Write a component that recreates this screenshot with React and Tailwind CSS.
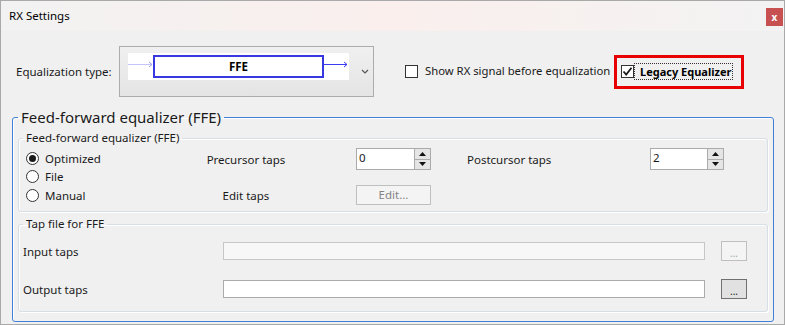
import React from "react";

const font = "font-['Noto_Sans',sans-serif]";

function CheckBox({ checked }) {
  return (
    <span className="w-[13px] h-[13px] border border-[#333] bg-white flex items-center justify-center shrink-0">
      {checked && (
        <svg width="11" height="11" viewBox="0 0 11 11">
          <path d="M1.5 5.5 L4.2 8.5 L9.5 1.8" fill="none" stroke="#1a1a1a" strokeWidth="1.8" />
        </svg>
      )}
    </span>
  );
}

function Radio({ checked, label }) {
  return (
    <div className="h-[18.5px] flex items-center">
      <span className="w-[13px] h-[13px] rounded-full border border-[#333] bg-white flex items-center justify-center shrink-0">
        {checked && <span className="w-[7px] h-[7px] rounded-full bg-[#1a1a1a]" />}
      </span>
      <span className="ml-[6px]">{label}</span>
    </div>
  );
}

function SpinBox({ value }) {
  return (
    <div className="w-full h-[22px] border border-[#ababab] bg-white flex">
      <span className="flex-1 pl-[2px] leading-[18px]">{value}</span>
      <div className="w-[16px] h-full flex flex-col border-l border-[#ababab]">
        <span className="flex-1 bg-[#e5e5e5] border-b border-[#ababab] flex items-center justify-center">
          <svg width="7" height="4" viewBox="0 0 7 4"><path d="M0 4 L3.5 0 L7 4 Z" fill="#111" /></svg>
        </span>
        <span className="flex-1 bg-[#e5e5e5] flex items-center justify-center">
          <svg width="7" height="4" viewBox="0 0 7 4"><path d="M0 0 L3.5 4 L7 0 Z" fill="#111" /></svg>
        </span>
      </div>
    </div>
  );
}

function DotsButton({ disabled }) {
  return (
    <button
      className={
        disabled
          ? "w-[26px] h-[20px] border border-[#bfbfbf] bg-[#f4f4f4] text-[#9aa] flex items-end justify-center pb-[2px] text-[10px] leading-[10px]"
          : "w-[26px] h-[20px] border border-[#707070] bg-[#e1e1e1] text-[#222] flex items-end justify-center pb-[2px] text-[10px] leading-[10px]"
      }
    >
      ...
    </button>
  );
}

export default function App() {
  return (
    <div className={`w-[786px] h-[325px] bg-white ${font} text-[11.5px] text-[#1a1a1a]`}>
      <div className="w-[785px] h-[325px] border border-[#a9a9a9] bg-[#f0f0f0] flex flex-col">
        {/* title bar */}
        <div className="h-[30px] flex items-center justify-between pl-[8px] pr-[1px] bg-gradient-to-r from-[#f2f2f2] via-[#faefed] to-[#f3f3f3]">
          <span className="text-[11.5px] text-black">RX Settings</span>
          <button className="w-[17px] h-[18px] mt-[2px] bg-[#c75050] text-white font-bold text-[10px] leading-[16px]">x</button>
        </div>

        {/* equalization row */}
        <div className="mt-[15px] h-[51px] flex items-center">
          <span className="ml-[15px] w-[103px] mt-[1px]">Equalization type:</span>
          <div className="w-[255px] h-[51px] border border-[#acacac] bg-gradient-to-b from-[#f0f0f0] to-[#e4e4e4] flex items-start pl-[8px] pt-[6px]">
            <div className="w-[221px] h-[27px] bg-white flex items-start">
              <svg width="25" height="27" viewBox="0 0 25 27" className="shrink-0">
                <path d="M0 11.5 H24" stroke="#c4c4fb" strokeWidth="1" />
                <path d="M21 9 L24 11.5 L21 14" fill="none" stroke="#9a9af5" strokeWidth="1" />
              </svg>
              <div className="w-[171px] h-[23px] mt-[2px] border-2 border-[#3838e0] flex items-center justify-center font-bold text-[11.5px] text-black">
                FFE
              </div>
              <svg width="25" height="27" viewBox="0 0 25 27" className="shrink-0">
                <path d="M0 11.5 H23" stroke="#3c3cf0" strokeWidth="1" />
                <path d="M20 9 L23 11.5 L20 14" fill="none" stroke="#3c3cf0" strokeWidth="1" />
              </svg>
            </div>
            <svg width="8" height="6" viewBox="0 0 8 6" className="ml-[12px] mt-[16px]">
              <path d="M1 1 L4 4 L7 1" fill="none" stroke="#555" strokeWidth="1.2" />
            </svg>
          </div>
          <div className="ml-[31px] w-[209px] flex items-center">
            <CheckBox />
            <span className="ml-[7px] whitespace-nowrap text-[11.3px]">Show RX signal before equalization</span>
          </div>
          <div className="w-[130px] h-[34px] border-[3px] border-[#e80000] flex items-center pl-[4px]">
            <CheckBox checked />
            <span className="h-[17px] border border-dotted border-[#333] pl-[5px] pr-[1px] font-bold text-[11px] leading-[15px] text-black whitespace-nowrap">
              Legacy Equalizer
            </span>
          </div>
        </div>

        {/* outer group */}
        <fieldset className="ml-[11px] mt-[10px] w-[762px] border border-[#4080d8] rounded-[3px] px-[5px] pb-[9px] shadow-[inset_1px_1px_0_#fff]">
          <legend className="px-[3px] text-[15px] leading-[20px]">Feed-forward equalizer (FFE)</legend>

          <fieldset className="mt-[3px] border border-[#d5dfe5] rounded-[3px] px-[4px] shadow-[inset_1px_1px_0_#fff,1px_1px_0_#fff]">
            <legend className="px-[3px] leading-[16px]">Feed-forward equalizer (FFE)</legend>
            <div className="h-[65px] flex">
              <div className="ml-[3px] w-[134px] pt-[3px] flex flex-col">
                <Radio checked label="Optimized" />
                <Radio label="File" />
                <Radio label="Manual" />
              </div>
              <div className="w-[172px] pt-[2px] flex flex-col items-center">
                <span className="h-[22px] leading-[24px]">Precursor taps</span>
                <span className="mt-[15px] h-[20px] leading-[22px]">Edit taps</span>
              </div>
              <div className="ml-[24px] w-[75px] pt-[2px] flex flex-col">
                <SpinBox value="0" />
                <button className="mt-[15px] h-[20px] border border-[#bfbfbf] bg-[#f4f4f4] text-[#838383] leading-[18px]">Edit...</button>
              </div>
              <div className="ml-[36px] w-[183px] pt-[2px]">
                <span className="block h-[22px] leading-[24px]">Postcursor taps</span>
              </div>
              <div className="w-[74px] pt-[2px]">
                <SpinBox value="2" />
              </div>
            </div>
          </fieldset>

          <fieldset className="mt-[4px] border border-[#d5dfe5] rounded-[3px] px-[4px] pt-[9px] pb-[12px] shadow-[inset_1px_1px_0_#fff,1px_1px_0_#fff]">
            <legend className="px-[3px] leading-[16px]">Tap file for FFE</legend>
            <div className="h-[20px] flex items-center">
              <span className="w-[200px] mt-[2px]">Input taps</span>
              <div className="w-[482px] h-[18px] border border-[#c6c6c6] bg-[#f7f7f7]" />
              <div className="ml-[16px]">
                <DotsButton disabled />
              </div>
            </div>
            <div className="mt-[18px] h-[20px] flex items-center">
              <span className="w-[200px] mt-[2px]">Output taps</span>
              <div className="w-[482px] h-[18px] border border-[#ababab] bg-white" />
              <div className="ml-[16px]">
                <DotsButton />
              </div>
            </div>
          </fieldset>
        </fieldset>
      </div>
    </div>
  );
}
